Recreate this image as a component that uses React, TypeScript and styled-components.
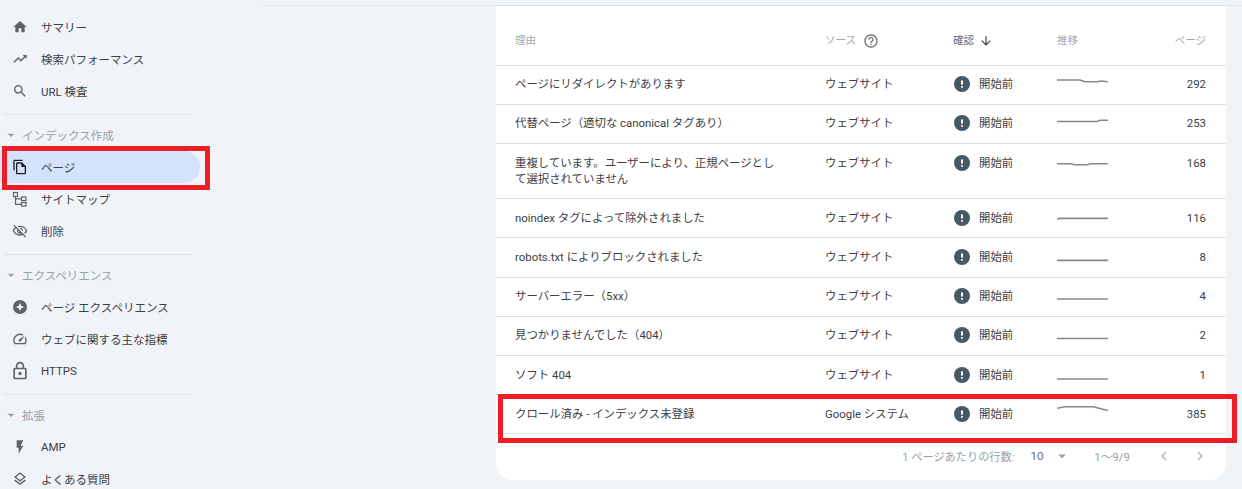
import React from "react";
import styled, { createGlobalStyle } from "styled-components";
import {
  MdHome,
  MdTrendingUp,
  MdSearch,
  MdOutlineFileCopy,
  MdOutlineVisibilityOff,
  MdOutlineSpeed,
  MdLockOutline,
  MdFlashOn,
  MdOutlineLayers,
  MdArrowDropDown,
  MdHelpOutline,
  MdArrowDownward,
  MdChevronLeft,
  MdChevronRight,
} from "react-icons/md";

const GlobalStyle = createGlobalStyle`
  html, body {
    margin: 0;
    height: 489px;
    overflow: hidden;
    background: #f0f4f9;
    font-family: Roboto, "Noto Sans CJK JP", sans-serif;
  }
`;

const Page = styled.div`
  position: relative;
  display: flex;
  width: 1242px;
  height: 489px;
  overflow: hidden;
`;

const Sidebar = styled.nav`
  width: 262px;
  flex: none;
  padding-top: 10.5px;
  box-sizing: border-box;
`;

const NavItem = styled.div<{ $active?: boolean }>`
  display: flex;
  align-items: center;
  width: 200px;
  height: 32px;
  padding-left: 12px;
  box-sizing: border-box;
  border-radius: 0 16px 16px 0;
  font-size: 11.5px;
  color: #3c4043;
  background: ${(p) => (p.$active ? "#d3e3fd" : "transparent")};

  svg {
    flex: none;
    width: 16px;
    height: 16px;
    margin-right: 13px;
    color: ${(p) => (p.$active ? "#1f1f1f" : "#5f6368")};
  }
`;

const LockIcon = styled(MdLockOutline)`
  && {
    width: 20px;
    height: 20px;
    margin: 0 11px 0 -2px;
  }
`;

const Divider = styled.div`
  width: 189px;
  height: 1px;
  margin: 7px 0 0 3px;
  background: #e0e3e7;
`;

const SectionLabel = styled.div`
  display: flex;
  align-items: center;
  height: 20px;
  margin: 10px 0 6px;
  padding-left: 3px;
  font-size: 11.5px;
  color: #9aa0a6;

  svg {
    width: 16px;
    height: 16px;
    margin-right: 3px;
  }
`;

const Main = styled.main`
  flex: 1;
  height: 484px;
  margin-top: 5px;
  padding: 0 16px 0 234px;
  border-top: 1px solid #dfe3e8;
  box-sizing: border-box;
`;

const Card = styled.section`
  height: 474px;
  background: #fff;
  border-radius: 0 0 16px 16px;
  overflow: hidden;
`;

const Row = styled.div`
  display: grid;
  grid-template-columns: 310px 129px 103px 1fr;
  padding: 10.6px 20px 11.6px 19px;
  border-bottom: 1px solid #e0e0e0;
  font-size: 11.4px;
  line-height: 16px;
  color: #3c4043;
`;

const HeaderRow = styled(Row)`
  padding-top: 27px;
  padding-bottom: 15.7px;
  font-size: 10.5px;
  color: #a4a8ad;
`;

const ColumnsRight = styled.div`
  display: flex;
  justify-content: space-between;
`;

const HeaderCell = styled.div<{ $strong?: boolean }>`
  display: flex;
  align-items: center;
  color: ${(p) => (p.$strong ? "#5f6b7a" : "inherit")};

  svg {
    width: ${(p) => (p.$strong ? 14 : 16)}px;
    height: ${(p) => (p.$strong ? 14 : 16)}px;
    margin-left: ${(p) => (p.$strong ? 5 : 7)}px;
    color: ${(p) => (p.$strong ? "#3c4043" : "#6f7479")};
  }
`;

const SortHeaderCell = styled(HeaderCell)`
  margin-left: -1px;
`;

const Reason = styled.div`
  width: 264px;
`;

const Status = styled.div`
  display: flex;
  align-items: center;
  height: 16px;
  gap: 9px;
`;

const StatusIcon = styled.svg`
  width: 16px;
  height: 16px;
  flex: none;
`;

const Spark = styled.svg`
  display: block;
  width: 51px;
  height: 16px;
`;

const Count = styled.div`
  text-align: right;
`;

const Pager = styled.div`
  display: flex;
  align-items: center;
  justify-content: flex-end;
  height: 43px;
  padding-right: 17px;
  font-size: 11.2px;
  color: #9aa0a6;
`;

const PagerSize = styled.span`
  margin-left: 16px;
  font-size: 11.5px;
  color: #6b7075;
`;

const PagerCaret = styled(MdArrowDropDown)`
  width: 18px;
  height: 18px;
  margin: 0 23px 0 10px;
`;

const PagerRange = styled.span`
  margin-right: 7px;
  font-size: 11.5px;
`;

const PagerArrow = styled.span`
  display: flex;
  margin-left: 18px;

  svg {
    width: 18px;
    height: 18px;
    color: #b4b8bc;
  }
`;

const Callout = styled.div<{ $x: number; $y: number; $w: number; $h: number }>`
  position: absolute;
  left: ${(p) => p.$x}px;
  top: ${(p) => p.$y}px;
  width: ${(p) => p.$w}px;
  height: ${(p) => p.$h}px;
  box-sizing: border-box;
  border: 5px solid #ee1c25;
  pointer-events: none;
`;

const SitemapIcon = () => (
  <svg viewBox="0 0 16 16" fill="none" stroke="currentColor" strokeWidth="1.2">
    <rect x="1.5" y="1.5" width="4" height="4" />
    <rect x="9.5" y="6" width="4.5" height="3.6" />
    <rect x="9.5" y="11.5" width="4.5" height="3.6" />
    <path d="M3.5 5.5V13.3H9.5M3.5 7.8H9.5" />
  </svg>
);

const ExperienceIcon = () => (
  <svg viewBox="0 0 16 16">
    <circle cx="8" cy="8" r="7" fill="currentColor" />
    <path d="M8 3.8 9.2 6.8 12.2 8 9.2 9.2 8 12.2 6.8 9.2 3.8 8 6.8 6.8Z" fill="#f0f4f9" />
  </svg>
);

const PendingIcon = () => (
  <StatusIcon viewBox="0 0 16 16">
    <circle cx="8" cy="8" r="8" fill="#455a64" />
    <rect x="7" y="4.2" width="2" height="4.6" rx="0.8" fill="#fff" />
    <rect x="7" y="10" width="2" height="1.9" rx="0.8" fill="#fff" />
  </StatusIcon>
);

const rows = [
  { reason: "ページにリダイレクトがあります", source: "ウェブサイト", spark: "M0 4H23L28 5.7H40L44 5L51 5.7", count: 292 },
  { reason: "代替ページ（適切な canonical タグあり）", source: "ウェブサイト", spark: "M0 6.5H40L43 5.3H51", count: 253 },
  { reason: "重複しています。ユーザーにより、正規ページとして選択されていません", source: "ウェブサイト", spark: "M0 8.8H14L18 9.8H30L34 8.8H51", count: 168 },
  { reason: "noindex タグによって除外されました", source: "ウェブサイト", spark: "M0 9L3 8.4H51", count: 116 },
  { reason: "robots.txt によりブロックされました", source: "ウェブサイト", spark: "M0 11.4H51", count: 8 },
  { reason: "サーバーエラー（5xx）", source: "ウェブサイト", spark: "M0 11H51", count: 4 },
  { reason: "見つかりませんでした（404）", source: "ウェブサイト", spark: "M0 11.5H51", count: 2 },
  { reason: "ソフト 404", source: "ウェブサイト", spark: "M0 12H51", count: 1 },
  { reason: "クロール済み - インデックス未登録", source: "Google システム", spark: "M0 2.3L8 0.8H36L51 4.5", count: 385 },
];

export default function App() {
  return (
    <Page>
      <GlobalStyle />
      <Sidebar>
        <NavItem><MdHome />サマリー</NavItem>
        <NavItem><MdTrendingUp />検索パフォーマンス</NavItem>
        <NavItem><MdSearch />URL 検査</NavItem>
        <Divider />
        <SectionLabel><MdArrowDropDown />インデックス作成</SectionLabel>
        <NavItem $active><MdOutlineFileCopy />ページ</NavItem>
        <NavItem><SitemapIcon />サイトマップ</NavItem>
        <NavItem><MdOutlineVisibilityOff />削除</NavItem>
        <Divider />
        <SectionLabel><MdArrowDropDown />エクスペリエンス</SectionLabel>
        <NavItem><ExperienceIcon />ページ エクスペリエンス</NavItem>
        <NavItem><MdOutlineSpeed />ウェブに関する主な指標</NavItem>
        <NavItem><LockIcon />HTTPS</NavItem>
        <Divider />
        <SectionLabel><MdArrowDropDown />拡張</SectionLabel>
        <NavItem><MdFlashOn />AMP</NavItem>
        <NavItem><MdOutlineLayers />よくある質問</NavItem>
      </Sidebar>
      <Main>
        <Card>
          <HeaderRow>
            <HeaderCell>理由</HeaderCell>
            <HeaderCell>ソース<MdHelpOutline /></HeaderCell>
            <SortHeaderCell $strong>確認<MdArrowDownward /></SortHeaderCell>
            <ColumnsRight>
              <HeaderCell>推移</HeaderCell>
              <HeaderCell>ページ</HeaderCell>
            </ColumnsRight>
          </HeaderRow>
          {rows.map((r) => (
            <Row key={r.reason}>
              <Reason>{r.reason}</Reason>
              <div>{r.source}</div>
              <Status><PendingIcon />開始前</Status>
              <ColumnsRight>
                <Spark viewBox="0 0 51 16">
                  <path d={r.spark} fill="none" stroke="#85898e" strokeWidth="1.6" />
                </Spark>
                <Count>{r.count}</Count>
              </ColumnsRight>
            </Row>
          ))}
          <Pager>
            1 ページあたりの行数:
            <PagerSize>10</PagerSize>
            <PagerCaret />
            <PagerRange>1〜9/9</PagerRange>
            <PagerArrow><MdChevronLeft /></PagerArrow>
            <PagerArrow><MdChevronRight /></PagerArrow>
          </Pager>
        </Card>
      </Main>
      <Callout $x={2} $y={146} $w={208} $h={44} />
      <Callout $x={498} $y={394} $w={739} $h={49} />
    </Page>
  );
}
